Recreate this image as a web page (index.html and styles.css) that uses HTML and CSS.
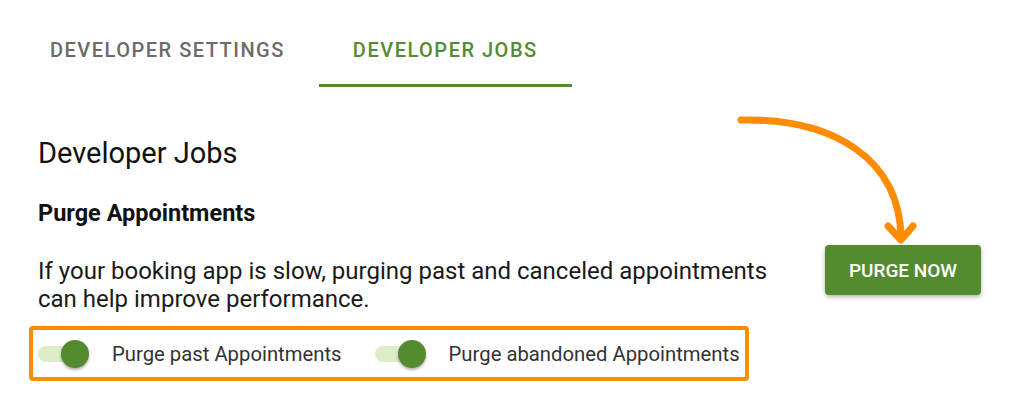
FILE: index.html
```html
<!DOCTYPE html>
<html lang="en">
<head>
    <meta charset="UTF-8">
    <meta name="viewport" content="width=device-width, initial-scale=1.0">
    <title>Developer Jobs</title>
    <link rel="stylesheet" href="styles.css">
</head>
<body>
    <div class="tabs">
        <div class="tab">DEVELOPER SETTINGS</div>
        <div class="tab active">DEVELOPER JOBS</div>
    </div>

    <div class="content">
        <h1>Developer Jobs</h1>
        <h2>Purge Appointments</h2>

        <div class="job-row">
            <p class="job-desc">If your booking app is slow, purging past and canceled appointments can help improve performance.</p>
            <button class="purge-btn">PURGE NOW</button>
        </div>

        <div class="options">
            <label class="option">
                <span class="switch"><span class="thumb"></span></span>
                Purge past Appointments
            </label>
            <label class="option">
                <span class="switch"><span class="thumb"></span></span>
                Purge abandoned Appointments
            </label>
        </div>
    </div>

    <!-- annotation arrow pointing at the button -->
    <svg class="arrow" width="1024" height="407" viewBox="0 0 1024 407">
        <path d="M741 120 C 835 118, 900 160, 901 238" fill="none" stroke="#ff8c00" stroke-width="7" stroke-linecap="round"/>
        <path d="M888 226 L901 240 L913 226" fill="none" stroke="#ff8c00" stroke-width="7" stroke-linecap="round" stroke-linejoin="round"/>
    </svg>
</body>
</html>
```

FILE: styles.css
```css
body {
    font-family: Roboto, "Liberation Sans", sans-serif;
    margin: 0;
    background-color: #fff;
    color: #111;
    position: relative;
    height: 407px;
    overflow: hidden;
}

.tabs {
    display: flex;
    padding-left: 16px;
    padding-top: 17px;
}

.tab {
    padding: 0 34px;
    height: 67px;
    line-height: 67px;
    font-size: 20px;
    font-weight: 500;
    letter-spacing: 1.5px;
    color: #6b6b6b;
    border-bottom: 3px solid transparent;
}

.tab.active {
    color: #558b2f;
    border-bottom-color: #558b2f;
}

/* Main content */
.content {
    padding-left: 38px;
    width: 946px;
}

.content h1 {
    font-size: 29px;
    font-weight: 400;
    margin: 49px 0 0;
    line-height: 34px;
}

.content h2 {
    font-size: 23.5px;
    font-weight: 700;
    margin: 30px 0 0;
    line-height: 27px;
}

.job-row {
    display: flex;
    align-items: flex-start;
    justify-content: space-between;
    margin-top: 30px;
}

.job-desc {
    font-size: 24px;
    line-height: 28px;
    width: 762px;
    margin: 0;
    color: #1a1a1a;
}

.purge-btn {
    font-family: Roboto, "Liberation Sans", sans-serif;
    background-color: #558b2f;
    color: #fff;
    border: none;
    border-radius: 4px;
    width: 156px;
    height: 50px;
    font-size: 19px;
    font-weight: 500;
    box-shadow: 0 2px 4px rgba(0, 0, 0, 0.3);
    margin-right: 3px;
    margin-top: -12px;
}

.options {
    display: inline-flex;
    align-items: center;
    gap: 33px;
    margin-top: 13px;
    margin-left: -9px;
    padding: 10px 5px 9px 5px;
    border: 4px solid #ff8c00;
    border-radius: 4px;
}

.option {
    display: flex;
    align-items: center;
    gap: 24px;
    height: 28px;
    font-size: 20.3px;
    color: #333;
}

.switch {
    position: relative;
    width: 50px;
    height: 16px;
    border-radius: 8px;
    background-color: #dcedc8;
}

.switch .thumb {
    position: absolute;
    right: -1px;
    top: -6px;
    width: 28px;
    height: 28px;
    border-radius: 50%;
    background-color: #558b2f;
    box-shadow: 0 2px 3px rgba(0, 0, 0, 0.3);
}

.arrow {
    position: absolute;
    left: 0;
    top: 0;
    pointer-events: none;
}
```
